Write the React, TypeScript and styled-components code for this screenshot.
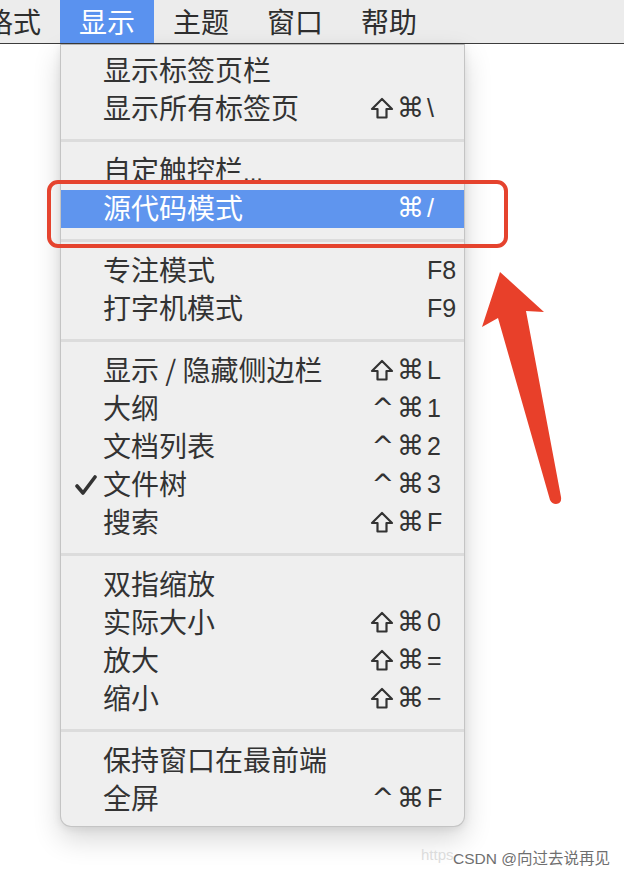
import React from "react"
import styled, { createGlobalStyle } from "styled-components"

const GlobalStyle = createGlobalStyle`
  html, body {
    margin: 0;
    padding: 0;
    background: #ffffff;
  }
  body {
    width: 624px;
    height: 874px;
    overflow: hidden;
    font-family: "Noto Sans CJK SC", "Noto Sans", sans-serif;
  }
`

const Page = styled.div`
  position: relative;
  width: 624px;
  height: 874px;
  overflow: hidden;
`

const MenuBar = styled.div`
  height: 44px;
  box-sizing: border-box;
  background: #ececec;
  border-bottom: 1px solid #3c3c3c;
  display: flex;
  overflow: hidden;
`

const Titles = styled.div`
  display: flex;
  margin-left: -34px;
`

const MenuTitle = styled.div<{ $active?: boolean }>`
  padding: 0 19px;
  height: 43px;
  line-height: 42px;
  font-size: 28px;
  color: ${(p) => (p.$active ? "#ffffff" : "#2e2e2e")};
  background: ${(p) => (p.$active ? "#5a92ef" : "transparent")};
`

const Dropdown = styled.div`
  margin-left: 60px;
  width: 405px;
  box-sizing: border-box;
  background: #efefef;
  border: 1px solid #c4c4c4;
  border-top-color: #b4b4b4;
  border-radius: 0 0 11px 11px;
  padding: 7px 0 8px;
  box-shadow: 0 12px 28px rgba(0, 0, 0, 0.16), 0 2px 8px rgba(0, 0, 0, 0.08);
`

const Row = styled.div<{ $selected?: boolean }>`
  display: grid;
  grid-template-columns: 42px 1fr auto;
  align-items: center;
  height: 38px;
  padding-right: 11px;
  color: ${(p) => (p.$selected ? "#ffffff" : "#333333")};
  background: ${(p) => (p.$selected ? "#5f95ee" : "transparent")};
`

const Check = styled.div`
  display: flex;
  justify-content: flex-end;
  padding-right: 6px;
`

const Label = styled.div`
  font-size: 28px;
  line-height: 34px;
  margin-bottom: 4px;
  white-space: nowrap;
`

const Dots = styled.span`
  font-family: "Liberation Sans", sans-serif;
  font-size: 24px;
`

const Shortcut = styled.div`
  display: flex;
  align-items: center;
  font-family: "Liberation Sans", "DejaVu Sans", sans-serif;
  font-size: 25px;
  line-height: 34px;
  margin-bottom: 2px;
`

const Mods = styled.span`
  display: flex;
  align-items: center;
  gap: 3px;
  margin-right: 3px;
`

const ModGlyph = styled.span`
  font-family: "DejaVu Sans", sans-serif;
  font-size: 27px;
`

const Key = styled.span`
  display: inline-block;
  width: 26px;
`

const Separator = styled.div`
  height: 24px;
  display: flex;
  align-items: center;

  &::after {
    content: "";
    display: block;
    width: 100%;
    height: 3px;
    background: #dcdcdc;
  }
`

const Highlight = styled.div`
  position: absolute;
  left: 47px;
  top: 180px;
  width: 461px;
  height: 68px;
  box-sizing: border-box;
  border: 4px solid #e5432e;
  border-radius: 11px;
`

const Arrow = styled.svg`
  position: absolute;
  left: 470px;
  top: 260px;
`

const Faint = styled.div`
  position: absolute;
  left: 421px;
  top: 846px;
  font-family: "Liberation Sans", sans-serif;
  font-size: 15px;
  color: #dcdcdc;
  white-space: nowrap;
`

const Watermark = styled.div`
  position: absolute;
  right: 14px;
  top: 846px;
  font-family: "Liberation Sans", "Noto Sans CJK SC", sans-serif;
  font-size: 15.5px;
  color: #6f6f6f;
  white-space: nowrap;
  text-shadow: 0 0 1px #ffffff;
`

type Item = {
  label?: string
  dots?: boolean
  mods?: string[]
  keyName?: string
  checked?: boolean
  selected?: boolean
  sep?: boolean
}

const items: Item[] = [
  { label: "显示标签页栏" },
  { label: "显示所有标签页", mods: ["shift", "⌘"], keyName: "\\" },
  { sep: true },
  { label: "自定触控栏", dots: true },
  { label: "源代码模式", mods: ["⌘"], keyName: "/", selected: true },
  { sep: true },
  { label: "专注模式", keyName: "F8" },
  { label: "打字机模式", keyName: "F9" },
  { sep: true },
  { label: "显示 / 隐藏侧边栏", mods: ["shift", "⌘"], keyName: "L" },
  { label: "大纲", mods: ["^", "⌘"], keyName: "1" },
  { label: "文档列表", mods: ["^", "⌘"], keyName: "2" },
  { label: "文件树", mods: ["^", "⌘"], keyName: "3", checked: true },
  { label: "搜索", mods: ["shift", "⌘"], keyName: "F" },
  { sep: true },
  { label: "双指缩放" },
  { label: "实际大小", mods: ["shift", "⌘"], keyName: "0" },
  { label: "放大", mods: ["shift", "⌘"], keyName: "=" },
  { label: "缩小", mods: ["shift", "⌘"], keyName: "−" },
  { sep: true },
  { label: "保持窗口在最前端" },
  { label: "全屏", mods: ["^", "⌘"], keyName: "F" },
]

const titles = ["格式", "显示", "主题", "窗口", "帮助"]

function ShiftIcon() {
  return (
    <svg width="24" height="22" viewBox="0 0 24 22">
      <path
        d="M12 2 L22 12 L16.5 12 L16.5 20.5 L7.5 20.5 L7.5 12 L2 12 Z"
        fill="none"
        stroke="currentColor"
        strokeWidth="2.2"
        strokeLinejoin="round"
      />
    </svg>
  )
}

export default function App() {
  return (
    <Page>
      <GlobalStyle />
      <MenuBar>
        <Titles>
          {titles.map((t) => (
            <MenuTitle key={t} $active={t === "显示"}>
              {t}
            </MenuTitle>
          ))}
        </Titles>
      </MenuBar>

      <Dropdown>
        {items.map((item, index) =>
          item.sep ? (
            <Separator key={index} />
          ) : (
            <Row key={index} $selected={item.selected}>
              <Check>
                {item.checked && (
                  <svg width="22" height="22" viewBox="0 0 22 22">
                    <path
                      d="M2 12 L8 19 L20 3"
                      fill="none"
                      stroke="#333"
                      strokeWidth="3.6"
                      strokeLinecap="round"
                      strokeLinejoin="round"
                    />
                  </svg>
                )}
              </Check>
              <Label>
                {item.label}
                {item.dots && <Dots>...</Dots>}
              </Label>
              <Shortcut>
                {item.mods && (
                  <Mods>
                    {item.mods.map((m, i) =>
                      m === "shift" ? <ShiftIcon key={i} /> : <ModGlyph key={i}>{m}</ModGlyph>
                    )}
                  </Mods>
                )}
                {item.keyName && <Key>{item.keyName}</Key>}
              </Shortcut>
            </Row>
          )
        )}
      </Dropdown>

      <Highlight />

      <Arrow width="100" height="260" viewBox="0 0 100 260">
        <path
          d="M30 12 L74 52 L56 51 L91 237 Q92 244 86 244 Q82 244 80 240 L28 58 L12 67 Z"
          fill="#e8402a"
        />
      </Arrow>

      <Faint>https</Faint>
      <Watermark>CSDN @向过去说再见</Watermark>
    </Page>
  )
}
